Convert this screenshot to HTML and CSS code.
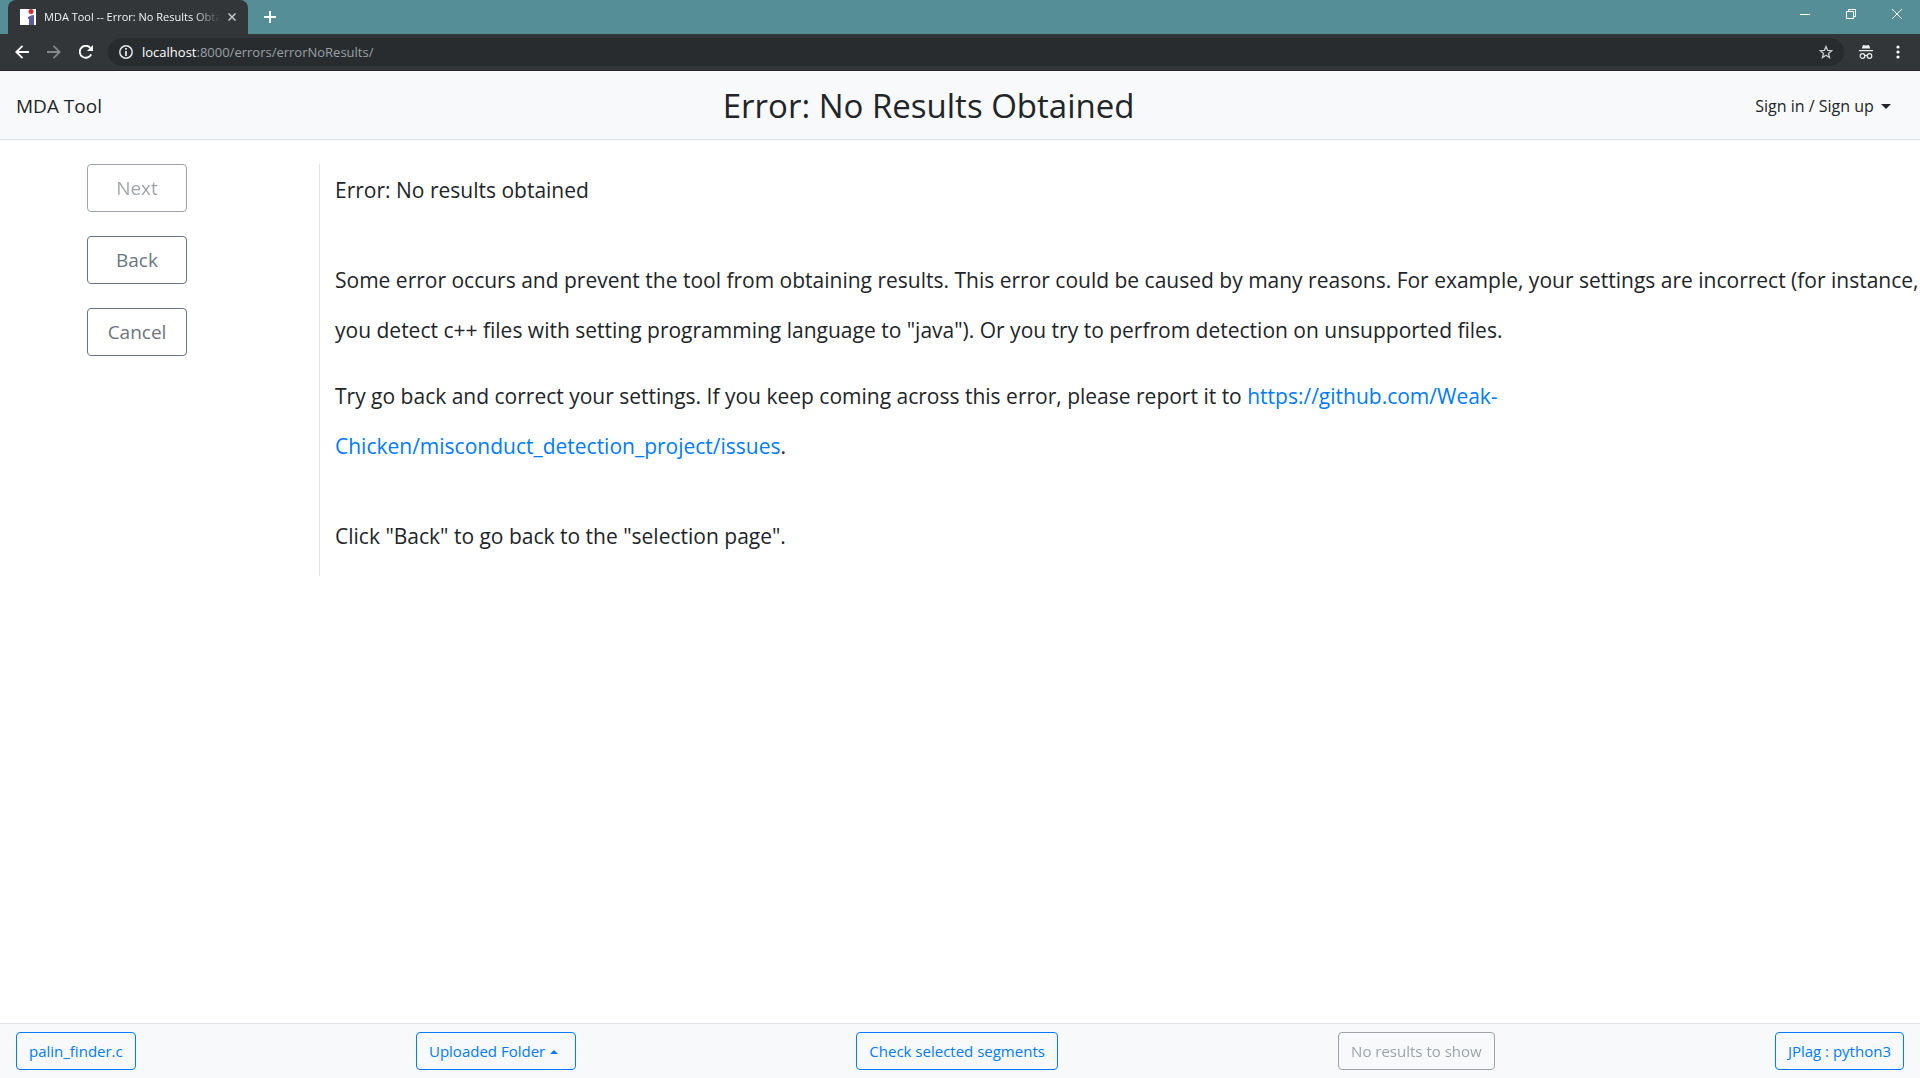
FILE: index.html
```html
<!DOCTYPE html>
<html lang="en">
<head>
<meta charset="utf-8">
<title>MDA Tool -- Error: No Results Obtained</title>
<link rel="stylesheet" href="styles.css">
</head>
<body>
<div class="browser">
  <div class="tab-strip">
    <div class="tab">
      <svg class="favicon" viewBox="0 0 16 16" width="16" height="16"><path fill="#fff" d="M0 0h16v16H0z"/><path fill="#5d5f9d" d="M8 8q3-2 6-2v10H9v-6H8z"/><circle cx="11" cy="2.500" r="2.500" fill="#d02c35"/></svg>
      <span class="tab-title">MDA Tool -- Error: No Results Obtained</span>
      <button class="icon-button" aria-label="Close tab"><svg viewBox="0 0 8 8" width="8" height="8"><path d="M.5.5l7 7M7.500.5l-7 7" stroke="#c7c9cb" stroke-width="1.500"/></svg></button>
    </div>
    <button class="icon-button new-tab" aria-label="New tab"><svg viewBox="0 0 12 12" width="12" height="12"><path d="M6 0v12M0 6h12" stroke="#fff" stroke-width="2"/></svg></button>
    <div class="window-controls">
      <button class="icon-button" aria-label="Minimize"><svg viewBox="0 0 10 10" width="10" height="10"><path d="M0 5.500h10" stroke="#fff"/></svg></button>
      <button class="icon-button" aria-label="Restore"><svg viewBox="0 0 10 10" width="10" height="10"><path d="M.5 2.500h7v7h-7zM2.500 2V.5h7v7H8" fill="none" stroke="#fff"/></svg></button>
      <button class="icon-button" aria-label="Close window"><svg viewBox="0 0 10 10" width="10" height="10"><path d="M0 0l10 10M10 0L0 10" stroke="#fff"/></svg></button>
    </div>
  </div>
  <div class="toolbar">
    <button class="icon-button" aria-label="Go back"><svg viewBox="0 0 14 14" width="14" height="14"><path d="M14 7H1.500M7.500.8L1.300 7l6.200 6.200" fill="none" stroke="#fff" stroke-width="1.800"/></svg></button>
    <button class="icon-button" aria-label="Go forward"><svg viewBox="0 0 14 14" width="14" height="14"><path d="M0 7h12.500M6.500.8L12.700 7l-6.200 6.200" fill="none" stroke="#85888a" stroke-width="1.800"/></svg></button>
    <button class="icon-button" aria-label="Reload"><svg viewBox="0 0 14 14" width="14" height="14"><path d="M12.200 9.300A6 6 0 1 1 11.300 2.800" fill="none" stroke="#fff" stroke-width="1.900"/><path d="M14 0v6H8z" fill="#fff"/></svg></button>
    <div class="address">
      <svg viewBox="0 0 14 14" width="14" height="14"><circle cx="7" cy="7" r="6.200" fill="none" stroke="#e4e6e8" stroke-width="1.500"/><path d="M7 3v1.700M7 6v5" stroke="#e4e6e8" stroke-width="1.800"/></svg>
      <span class="url"><span class="host">localhost</span>:8000/errors/errorNoResults/</span>
      <button class="icon-button" aria-label="Bookmark"><svg viewBox="0 0 14 14" width="14" height="14"><path d="M7 1.500l1.600 3.900 4.100.3-3.200 2.700 1 4.100L7 10.300l-3.500 2.200 1-4.100L1.300 5.700l4.100-.3z" fill="none" stroke="#c9cbcd" stroke-width="1.300"/></svg></button>
    </div>
    <svg class="incognito" viewBox="0 0 14 14" width="14" height="14"><path d="M4 0l3 .6L10 0l1.200 3.500H2.800zM0 5h14v1.300H0z" fill="#eee"/><g fill="none" stroke="#eee" stroke-width="1.200"><circle cx="3.500" cy="11" r="2.300"/><circle cx="10.500" cy="11" r="2.300"/><path d="M5.800 10.600q1.200-.6 2.400 0"/></g></svg>
    <button class="icon-button menu" aria-label="Browser menu"><svg viewBox="0 0 4 14" width="4" height="14"><g fill="#fff"><circle cx="2" cy="2" r="1.600"/><circle cx="2" cy="7" r="1.600"/><circle cx="2" cy="12" r="1.600"/></g></svg></button>
  </div>
</div>
<header class="navbar">
  <a class="brand" href="#">MDA Tool</a>
  <h1 class="page-title">Error: No Results Obtained</h1>
  <button class="account">Sign in / Sign up <span class="caret"></span></button>
</header>
<main class="content">
  <nav class="steps">
    <button class="btn btn-large" disabled>Next</button>
    <button class="btn btn-large">Back</button>
    <button class="btn btn-large">Cancel</button>
  </nav>
  <section class="message">
    <p class="spaced">Error: No results obtained</p>
    <p>Some error occurs and prevent the tool from obtaining results. This error could be caused by many reasons. For example, your settings are incorrect (for instance, you detect c++ files with setting programming language to "java"). Or you try to perfrom detection on unsupported files.</p>
    <p class="spaced">Try go back and correct your settings. If you keep coming across this error, please report it to <a href="#">https://github.com/Weak-<wbr>Chicken/misconduct_detection_project/issues</a>.</p>
    <p>Click "Back" to go back to the "selection page".</p>
  </section>
</main>
<footer class="footer">
  <button class="btn btn-primary">palin_finder.c</button>
  <button class="btn btn-primary">Uploaded Folder <span class="caret caret-up"></span></button>
  <button class="btn btn-primary">Check selected segments</button>
  <button class="btn" disabled>No results to show</button>
  <button class="btn btn-primary">JPlag : python3</button>
</footer>
</body>
</html>
```
FILE: styles.css
```css
* { box-sizing: border-box; }
body {
  margin: 0;
  min-height: 100vh;
  display: flex;
  flex-direction: column;
  background: #fff;
  color: #212529;
  font: 15px/24px "Open Sans", "Noto Sans", sans-serif;
}
button { font: inherit; cursor: pointer; }
svg { display: block; flex: none; }
a { color: #007bff; text-decoration: none; }

.icon-button {
  display: flex;
  align-items: center;
  justify-content: center;
  padding: 0;
  border: 0;
  background: none;
}
.tab-strip {
  display: flex;
  height: 34px;
  padding-left: 8px;
  background: #558e96;
}
.tab {
  display: flex;
  align-items: center;
  width: 240px;
  padding: 0 12px;
  border-radius: 8px 8px 0 0;
  background: #323639;
}
.tab-title {
  flex: 1;
  min-width: 0;
  margin: 0 8px;
  overflow: hidden;
  white-space: nowrap;
  font-size: 11px;
  color: #f1f3f4;
  mask-image: linear-gradient(to right, #000 85%, transparent);
}
.new-tab { width: 44px; }
.window-controls { display: flex; height: 28px; margin-left: auto; }
.window-controls .icon-button { width: 46px; }
.toolbar {
  display: flex;
  align-items: center;
  gap: 18px;
  height: 37px;
  padding: 0 15px;
  border-bottom: 1px solid #29252c;
  background: #323639;
}
.address {
  display: flex;
  flex: 1;
  align-items: center;
  gap: 9px;
  height: 28px;
  margin: 0 -3px;
  padding: 0 11px;
  border-radius: 14px;
  background: #282c2f;
}
.url { flex: 1; font-size: 13px; color: #9aa0a6; }
.host { color: #fff; }
.menu { width: 14px; }

.navbar {
  display: flex;
  align-items: center;
  justify-content: space-between;
  height: 69px;
  padding: 1px 16px 0;
  border-bottom: 1px solid #dee2e6;
  background: #f8f9fa;
}
.brand { font-size: 19px; color: #212529; }
.page-title { margin: 0; font-size: 33px; line-height: 40px; font-weight: 400; }
.account {
  padding: 6px 13px 6px 0;
  border: 0;
  background: none;
  color: #212529;
  font-size: 16px;
}
.caret {
  display: inline-block;
  margin-left: 3px;
  border: 5px solid transparent;
  border-top-color: currentColor;
  border-bottom: 0;
  vertical-align: 3px;
}
.caret-up {
  margin: 0 5px 0 1px;
  border: 4px solid transparent;
  border-bottom-color: currentColor;
  border-top: 0;
}

.content { display: flex; flex: 1; align-items: flex-start; padding-top: 24px; }
.steps {
  display: flex;
  flex: none;
  flex-direction: column;
  gap: 24px;
  width: 319px;
  padding-left: 87px;
}
.message {
  flex: 1;
  padding: 1px 0 0 15px;
  border-left: 1px solid #dee2e6;
  font-size: 21px;
  line-height: 50px;
}
.message p { margin: 0 0 16px; }
.message .spaced { margin-bottom: 40px; }
.message p:last-child { margin-bottom: 15px; }

.btn {
  padding: 6px 12px;
  border: 1px solid #6c757d;
  border-radius: 4px;
  background: transparent;
  color: #6c757d;
}
.btn:disabled { opacity: .65; cursor: default; }
.btn-primary { border-color: #007bff; color: #007bff; }
.btn-large { width: 100px; padding: 8px; font-size: 19px; line-height: 30px; }

.footer {
  display: flex;
  align-items: center;
  justify-content: space-between;
  height: 55px;
  padding: 0 16px;
  border-top: 1px solid #dee2e6;
  background: #f8f9fa;
}
```
